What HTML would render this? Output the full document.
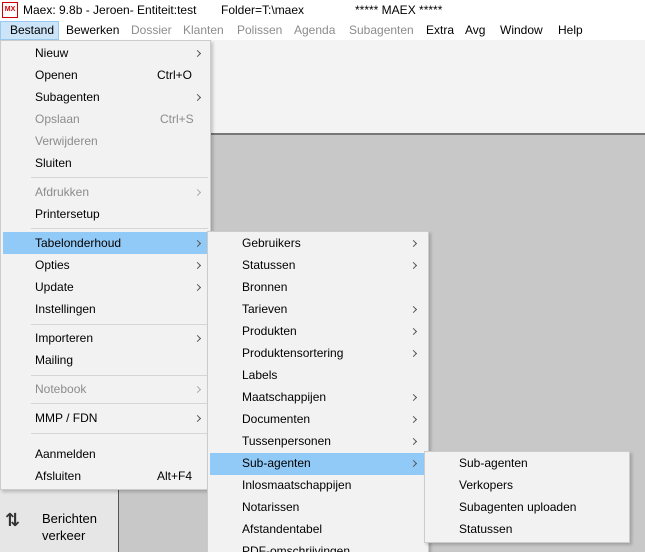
<!DOCTYPE html><html style="overflow:hidden;width:645px;height:552px"><head><style>
*{margin:0;padding:0;box-sizing:border-box}
body{width:645px;height:552px;overflow:hidden;position:relative;background:#c8c8c8;font-family:"Liberation Sans","DejaVu Sans",sans-serif;font-size:12px;color:#000}
.abs{position:absolute}
.menu{position:absolute;background:#f2f2f2;border:1px solid #ccc;box-shadow:2px 2px 3px rgba(0,0,0,.2)}
.it{position:absolute;height:22px;line-height:22px;white-space:nowrap}
.dis{color:#8c8c8c}
.sep{position:absolute;height:1px;background:#d5d5d5}
.arr{position:absolute;width:5px;height:5px;border-right:1px solid #555;border-top:1px solid #555;transform:rotate(45deg)}
.arr.dis{border-color:#aaa}
.hl{position:absolute;background:#91c9f7}
</style></head><body>
<div class="abs" style="left:0;top:0;width:645px;height:20px;background:#fff"></div>
<div class="abs" style="left:2px;top:2px;width:16px;height:16px;border:1px solid #c00;background:#fff;font-size:7px;color:#c00;line-height:14px;text-align:center;font-weight:bold">MX</div>
<div class="it" style="left:23px;top:-1px">Maex: 9.8b - Jeroen- Entiteit:test</div>
<div class="it" style="left:221px;top:-1px">Folder=T:\maex</div>
<div class="it" style="left:355px;top:-1px">***** MAEX *****</div>
<div class="abs" style="left:0;top:20px;width:645px;height:20px;background:#fff"></div>
<div class="abs" style="left:0;top:21px;width:59px;height:19px;background:#cce4f7;border:1px solid #99c9ef"></div>
<div class="it" style="left:10px;top:20px;line-height:21px">Bestand</div>
<div class="it" style="left:66px;top:20px;line-height:21px">Bewerken</div>
<div class="it dis" style="left:131px;top:20px;line-height:21px">Dossier</div>
<div class="it dis" style="left:183px;top:20px;line-height:21px">Klanten</div>
<div class="it dis" style="left:237px;top:20px;line-height:21px">Polissen</div>
<div class="it dis" style="left:294px;top:20px;line-height:21px">Agenda</div>
<div class="it dis" style="left:349px;top:20px;line-height:21px">Subagenten</div>
<div class="it" style="left:426px;top:20px;line-height:21px">Extra</div>
<div class="it" style="left:465px;top:20px;line-height:21px">Avg</div>
<div class="it" style="left:500px;top:20px;line-height:21px">Window</div>
<div class="it" style="left:558px;top:20px;line-height:21px">Help</div>
<div class="abs" style="left:0;top:40px;width:645px;height:93px;background:#f3f3f3"></div>
<div class="abs" style="left:0;top:133px;width:645px;height:2px;background:#777"></div>
<div class="abs" style="left:0;top:135px;width:119px;height:417px;background:#e6e6e6;border-right:1px solid #555"></div>
<div class="abs" style="left:5px;top:510px;font-size:18px;color:#333;font-weight:bold">⇅</div>
<div class="it" style="left:42px;top:510px;line-height:17px;font-size:13px">Berichten<br>verkeer</div>

<div class="menu" style="left:0;top:40px;width:211px;height:450px">
<div class="hl" style="left:2px;top:191px;width:205px;height:22px"></div>
</div>
<div class="abs" style="left:0;top:40px;font-size:12px">
<div class="it" style="left:35px;top:2px">Nieuw</div><div class="arr" style="left:195px;top:11px"></div>
<div class="it" style="left:35px;top:24px">Openen</div><div class="it" style="left:157px;top:24px">Ctrl+O</div>
<div class="it" style="left:35px;top:46px">Subagenten</div><div class="arr" style="left:195px;top:55px"></div>
<div class="it dis" style="left:35px;top:68px">Opslaan</div><div class="it dis" style="left:160px;top:68px">Ctrl+S</div>
<div class="it dis" style="left:35px;top:90px">Verwijderen</div>
<div class="it" style="left:35px;top:112px">Sluiten</div>
<div class="sep" style="left:31px;top:137px;width:177px"></div>
<div class="it dis" style="left:35px;top:141px">Afdrukken</div><div class="arr dis" style="left:195px;top:150px"></div>
<div class="it" style="left:35px;top:163px">Printersetup</div>
<div class="sep" style="left:31px;top:188px;width:177px"></div>
<div class="it" style="left:35px;top:192px">Tabelonderhoud</div><div class="arr" style="left:195px;top:201px"></div>
<div class="it" style="left:35px;top:214px">Opties</div><div class="arr" style="left:195px;top:223px"></div>
<div class="it" style="left:35px;top:236px">Update</div><div class="arr" style="left:195px;top:245px"></div>
<div class="it" style="left:35px;top:258px">Instellingen</div>
<div class="sep" style="left:31px;top:284px;width:177px"></div>
<div class="it" style="left:35px;top:287px">Importeren</div><div class="arr" style="left:195px;top:296px"></div>
<div class="it" style="left:35px;top:309px">Mailing</div>
<div class="sep" style="left:31px;top:335px;width:177px"></div>
<div class="it dis" style="left:35px;top:338px">Notebook</div><div class="arr dis" style="left:195px;top:347px"></div>
<div class="sep" style="left:31px;top:363px;width:177px"></div>
<div class="it" style="left:35px;top:367px">MMP / FDN</div><div class="arr" style="left:195px;top:376px"></div>
<div class="sep" style="left:31px;top:393px;width:177px"></div>
<div class="it" style="left:35px;top:403px">Aanmelden</div>
<div class="it" style="left:35px;top:425px">Afsluiten</div><div class="it" style="left:157px;top:425px">Alt+F4</div>
</div>

<div class="menu" style="left:207px;top:231px;width:222px;height:330px">
<div class="hl" style="left:2px;top:221px;width:216px;height:22px"></div>
</div>
<div class="abs" style="left:207px;top:231px">
<div class="it" style="left:35px;top:1px">Gebruikers</div><div class="arr" style="left:204px;top:10px"></div>
<div class="it" style="left:35px;top:23px">Statussen</div><div class="arr" style="left:204px;top:32px"></div>
<div class="it" style="left:35px;top:45px">Bronnen</div>
<div class="it" style="left:35px;top:67px">Tarieven</div><div class="arr" style="left:204px;top:76px"></div>
<div class="it" style="left:35px;top:89px">Produkten</div><div class="arr" style="left:204px;top:98px"></div>
<div class="it" style="left:35px;top:111px">Produktensortering</div><div class="arr" style="left:204px;top:120px"></div>
<div class="it" style="left:35px;top:133px">Labels</div>
<div class="it" style="left:35px;top:155px">Maatschappijen</div><div class="arr" style="left:204px;top:164px"></div>
<div class="it" style="left:35px;top:177px">Documenten</div><div class="arr" style="left:204px;top:186px"></div>
<div class="it" style="left:35px;top:199px">Tussenpersonen</div><div class="arr" style="left:204px;top:208px"></div>
<div class="it" style="left:35px;top:221px">Sub-agenten</div><div class="arr" style="left:204px;top:230px"></div>
<div class="it" style="left:35px;top:243px">Inlosmaatschappijen</div>
<div class="it" style="left:35px;top:265px">Notarissen</div>
<div class="it" style="left:35px;top:287px">Afstandentabel</div>
<div class="it" style="left:35px;top:309px">PDF-omschrijvingen</div>
</div>

<div class="menu" style="left:424px;top:451px;width:206px;height:92px"></div>
<div class="abs" style="left:424px;top:451px">
<div class="it" style="left:35px;top:1px">Sub-agenten</div>
<div class="it" style="left:35px;top:23px">Verkopers</div>
<div class="it" style="left:35px;top:45px">Subagenten uploaden</div>
<div class="it" style="left:35px;top:67px">Statussen</div>
</div>
</body></html>
